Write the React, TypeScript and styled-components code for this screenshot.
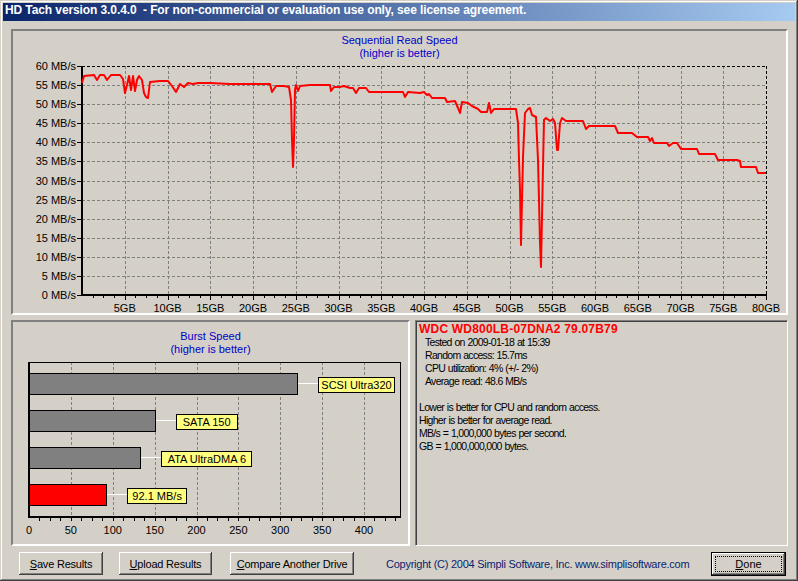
import React from 'react';
import styled, { createGlobalStyle } from 'styled-components';

const GlobalStyle = createGlobalStyle`
  body {
    margin: 0;
    background: #d4d0c8;
    font-family: "Liberation Sans", Arial, sans-serif;
    font-size: 11px;
  }
`;

const Window = styled.div`
  width: 798px;
  height: 581px;
  box-sizing: border-box;
  padding: 3px;
  display: flex;
  flex-direction: column;
  background: #d4d0c8;
  box-shadow: inset -1px -1px #404040, inset 1px 1px #d4d0c8,
    inset -2px -2px #808080, inset 2px 2px #ffffff;
`;

const TitleBar = styled.div`
  height: 18px;
  line-height: 20px;
  padding-left: 2px;
  background: linear-gradient(to right, #0a246a, #a6caf0);
  color: #ffffff;
  font: bold 12px "Liberation Sans", Arial, sans-serif;
  white-space: pre;
  letter-spacing: -0.1px;
  overflow: hidden;
`;

const Body = styled.div`
  flex: 1;
  display: flex;
  flex-direction: column;
  gap: 5px;
  padding: 8px 7px 0 8px;
`;

const Sunken = styled.div`
  box-sizing: border-box;
  border: 2px solid;
  border-color: #808080 #ffffff #ffffff #808080;
`;

const SpeedPanel = styled(Sunken)`
  height: 286px;
  display: flex;
  flex-direction: column;
`;

const BottomRow = styled.div`
  height: 226px;
  display: flex;
  gap: 5px;
`;

const BurstPanel = styled(Sunken)`
  width: 399px;
  display: flex;
  flex-direction: column;
`;

const InfoPanel = styled.div`
  flex: 1;
  box-sizing: border-box;
  border: 1px solid;
  border-color: #808080 #ffffff #ffffff #808080;
  box-shadow: inset 1px 1px #404040, inset -1px -1px #d4d0c8;
  padding: 2px 3px;
  color: #000000;
  font: 10.5px "Liberation Sans", Arial, sans-serif;
`;

const ChartTitle = styled.div<{ $top: number }>`
  padding-top: ${(p) => p.$top}px;
  color: #0000c8;
  text-align: center;
  line-height: 13px;
`;

const ChartSvg = styled.svg`
  display: block;
  font-family: "Liberation Sans", Arial, sans-serif;
  font-size: 11px;
`;

const DriveName = styled.div`
  color: #ff0000;
  font: bold 12px "Liberation Sans", Arial, sans-serif;
  letter-spacing: 0.2px;
  line-height: 13px;
`;

const InfoLine = styled.div<{ $indent?: boolean }>`
  line-height: 13px;
  padding-left: ${(p) => (p.$indent ? 6 : 0)}px;
  min-height: 13px;
  letter-spacing: -0.7px;
  word-spacing: 0.5px;
`;

const ButtonBar = styled.div`
  flex: 1;
  display: flex;
  align-items: center;
  padding: 0 2px 2px 8px;
`;

const Button = styled.button<{ $width: number; $gap: number }>`
  width: ${(p) => p.$width}px;
  height: 23px;
  margin-left: ${(p) => p.$gap}px;
  background: #d4d0c8;
  border: none;
  padding: 0;
  color: #000000;
  font: 11px "Liberation Sans", Arial, sans-serif;
  letter-spacing: -0.2px;
  box-shadow: inset -1px -1px #404040, inset 1px 1px #ffffff,
    inset -2px -2px #808080, inset 2px 2px #d4d0c8;
`;

const DoneButton = styled.button`
  width: 75px;
  height: 24px;
  margin-left: auto;
  position: relative;
  background: #d4d0c8;
  border: 1px solid #000000;
  padding: 0;
  color: #000000;
  font: 11px "Liberation Sans", Arial, sans-serif;
  box-shadow: inset -1px -1px #404040, inset 1px 1px #ffffff,
    inset -2px -2px #808080, inset 2px 2px #d4d0c8;

  &::after {
    content: '';
    position: absolute;
    inset: 3px;
    border: 1px dotted #000000;
  }
`;

const Copyright = styled.div`
  margin-left: 32px;
  color: #0a1f6e;
  white-space: nowrap;
  letter-spacing: -0.25px;
`;

// sequential read chart, page coordinates
const X0 = 82, X1 = 766, Y0 = 295, Y1 = 66;
const gbX = (gb: number) => X0 + (gb * (X1 - X0)) / 80;
const mbY = (mb: number) => Y0 - (mb * (Y0 - Y1)) / 60;

const readCurve: [number, number][] = [
  [82, 83], [84, 76], [94, 75], [97, 80], [100, 75], [104, 75], [107, 80], [111, 75], [120, 75],
  [123, 79], [125, 93], [127, 85], [129, 76], [131, 90], [133, 76], [135, 91], [137, 80], [139, 76],
  [142, 80], [144, 93], [146, 97], [148, 98], [150, 82], [160, 81], [168, 81], [172, 86], [176, 92],
  [180, 84], [184, 87], [188, 83], [193, 84], [198, 83], [210, 83], [230, 84], [250, 84], [270, 84],
  [272, 92], [276, 86], [284, 86], [289, 87], [291, 100], [292, 140], [293, 167], [294, 140],
  [295, 90], [296, 85], [298, 91], [300, 86], [310, 85], [330, 85], [331, 91], [334, 87], [340, 87],
  [344, 86], [350, 88], [353, 88], [356, 93], [359, 88], [366, 88], [369, 92], [380, 92], [403, 92],
  [405, 97], [408, 92], [420, 93], [424, 92], [427, 95], [429, 94], [432, 98], [445, 98], [447, 102],
  [455, 101], [458, 108], [460, 113], [462, 102], [468, 103], [472, 106], [478, 109], [481, 112],
  [487, 112], [489, 103], [491, 113], [494, 109], [516, 109], [518, 123], [519, 160], [520, 190],
  [521, 245], [522, 200], [523, 157], [525, 113], [528, 109], [530, 108], [532, 115], [536, 117],
  [538, 160], [539, 200], [540, 243], [541, 267], [542, 217], [543, 167], [544, 120], [546, 118],
  [550, 121], [553, 119], [555, 123], [557, 150], [558, 150], [560, 123], [562, 118], [566, 121],
  [570, 121], [583, 121], [586, 129], [589, 126], [615, 126], [618, 133], [632, 133], [637, 137],
  [648, 137], [650, 141], [652, 138], [654, 143], [667, 143], [669, 146], [673, 143], [677, 143],
  [681, 149], [697, 149], [699, 154], [715, 154], [718, 160], [737, 160], [740, 161], [741, 167],
  [756, 167], [758, 173], [766, 173],
];

const range = (from: number, to: number, step: number) => {
  const out: number[] = [];
  for (let v = from; v <= to; v += step) out.push(v);
  return out;
};

const SpeedChart = () => (
  <ChartSvg width={773} height={253} viewBox="13 60 773 253">
    {range(5, 55, 5).map((mb) => (
      <line key={'h' + mb} x1={X0} x2={X1} y1={mbY(mb) + 0.5} y2={mbY(mb) + 0.5}
        stroke="#808080" strokeDasharray="3 2" shapeRendering="crispEdges" />
    ))}
    {range(5, 75, 5).map((gb) => (
      <line key={'v' + gb} x1={gbX(gb) + 0.5} x2={gbX(gb) + 0.5} y1={Y1} y2={Y0}
        stroke="#808080" strokeDasharray="3 2" shapeRendering="crispEdges" />
    ))}
    <line x1={X0} x2={X1} y1={Y1 + 0.5} y2={Y1 + 0.5} stroke="#000" strokeDasharray="3 2" shapeRendering="crispEdges" />
    <line x1={X1 + 0.5} x2={X1 + 0.5} y1={Y1} y2={Y0} stroke="#000" strokeDasharray="3 2" shapeRendering="crispEdges" />
    {range(0, 60, 5).map((mb) => (
      <g key={'y' + mb}>
        <line x1={77} x2={X0} y1={mbY(mb) + 0.5} y2={mbY(mb) + 0.5} stroke="#000" shapeRendering="crispEdges" />
        <text x={76} y={mbY(mb) + 4} textAnchor="end">{mb} MB/s</text>
      </g>
    ))}
    {range(1, 64, 1).map((i) => (
      <line key={'t' + i} x1={gbX(i * 1.25) + 0.5} x2={gbX(i * 1.25) + 0.5} y1={Y0}
        y2={Y0 + (i % 4 === 0 ? 5 : 3)} stroke="#000" shapeRendering="crispEdges" />
    ))}
    {range(5, 80, 5).map((gb) => (
      <text key={'x' + gb} x={gbX(gb)} y={312} textAnchor="middle">{gb}GB</text>
    ))}
    <line x1={X0} x2={X0} y1={Y1} y2={Y0 + 1} stroke="#000" strokeWidth={2} shapeRendering="crispEdges" />
    <line x1={X0 - 1} x2={X1 + 1} y1={Y0} y2={Y0} stroke="#000" strokeWidth={2} shapeRendering="crispEdges" />
    <polyline points={readCurve.map((p) => p.join(',')).join(' ')} fill="none"
      stroke="#ff0000" strokeWidth={2} strokeLinejoin="round" />
  </ChartSvg>
);

// burst chart, page coordinates
const BX0 = 29, BX1 = 400, BY0 = 517, BY1 = 362;
const bx = (v: number) => BX0 + v * 0.8375;

const bursts = [
  { label: 'SCSI Ultra320', value: 320, fill: '#808080', y: 373, w: 76 },
  { label: 'SATA 150', value: 150, fill: '#808080', y: 410, w: 61 },
  { label: 'ATA UltraDMA 6', value: 133, fill: '#808080', y: 447, w: 90 },
  { label: '92.1 MB/s', value: 92.1, fill: '#ff0000', y: 484, w: 59 },
];

const BurstChart = () => (
  <ChartSvg width={395} height={188} viewBox="13 356 395 188">
    {range(50, 400, 50).map((v) => (
      <line key={'g' + v} x1={bx(v) + 0.5} x2={bx(v) + 0.5} y1={BY1} y2={BY0}
        stroke="#808080" strokeDasharray="3 2" shapeRendering="crispEdges" />
    ))}
    <rect x={BX0 + 0.5} y={BY1 + 0.5} width={BX1 - BX0} height={BY0 - BY1} fill="none" stroke="#000" shapeRendering="crispEdges" />
    {range(1, 35, 1).map((i) => (
      <line key={'t' + i} x1={bx(i * 12.5) + 0.5} x2={bx(i * 12.5) + 0.5} y1={BY0} y2={BY0 + 4}
        stroke="#000" shapeRendering="crispEdges" />
    ))}
    {range(0, 400, 50).map((v) => (
      <text key={'l' + v} x={bx(v)} y={534} textAnchor="middle">{v}</text>
    ))}
    {bursts.map((b) => {
      const end = bx(b.value);
      return (
        <g key={b.label}>
          <line x1={end} x2={end + 21} y1={b.y + 10.5} y2={b.y + 10.5} stroke="#ffffff" shapeRendering="crispEdges" />
          <rect x={BX0 + 0.5} y={b.y + 0.5} width={end - BX0} height={21} fill={b.fill} stroke="#000" shapeRendering="crispEdges" />
          <rect x={end + 21.5} y={b.y + 4.5} width={b.w} height={15} fill="#ffff80" stroke="#000" shapeRendering="crispEdges" />
          <text x={end + 21.5 + b.w / 2} y={b.y + 16} textAnchor="middle">{b.label}</text>
        </g>
      );
    })}
    <line x1={BX0} x2={BX0} y1={BY1} y2={BY0 + 1} stroke="#000" strokeWidth={2} shapeRendering="crispEdges" />
    <line x1={BX0 - 1} x2={BX1 + 1} y1={BY0} y2={BY0} stroke="#000" strokeWidth={2} shapeRendering="crispEdges" />
  </ChartSvg>
);

export const App = () => (
  <Window>
    <GlobalStyle />
    <TitleBar>{'HD Tach version 3.0.4.0  - For non-commercial or evaluation use only, see license agreement.'}</TitleBar>
    <Body>
      <SpeedPanel>
        <ChartTitle $top={3}>
          <div>Sequential Read Speed</div>
          <div>(higher is better)</div>
        </ChartTitle>
        <SpeedChart />
      </SpeedPanel>
      <BottomRow>
        <BurstPanel>
          <ChartTitle $top={8}>
            <div>Burst Speed</div>
            <div>(higher is better)</div>
          </ChartTitle>
          <BurstChart />
        </BurstPanel>
        <InfoPanel>
          <DriveName>WDC WD800LB-07DNA2 79.07B79</DriveName>
          <InfoLine $indent>Tested on 2009-01-18 at 15:39</InfoLine>
          <InfoLine $indent>Random access: 15.7ms</InfoLine>
          <InfoLine $indent>CPU utilization: 4% (+/- 2%)</InfoLine>
          <InfoLine $indent>Average read: 48.6 MB/s</InfoLine>
          <InfoLine />
          <InfoLine>Lower is better for CPU and random access.</InfoLine>
          <InfoLine>Higher is better for average read.</InfoLine>
          <InfoLine>MB/s = 1,000,000 bytes per second.</InfoLine>
          <InfoLine>GB = 1,000,000,000 bytes.</InfoLine>
        </InfoPanel>
      </BottomRow>
      <ButtonBar>
        <Button $width={84} $gap={0}><u>S</u>ave Results</Button>
        <Button $width={93} $gap={16}><u>U</u>pload Results</Button>
        <Button $width={124} $gap={18}><u>C</u>ompare Another Drive</Button>
        <Copyright>Copyright (C) 2004 Simpli Software, Inc. www.simplisoftware.com</Copyright>
        <DoneButton><u>D</u>one</DoneButton>
      </ButtonBar>
    </Body>
  </Window>
);

export default App;
